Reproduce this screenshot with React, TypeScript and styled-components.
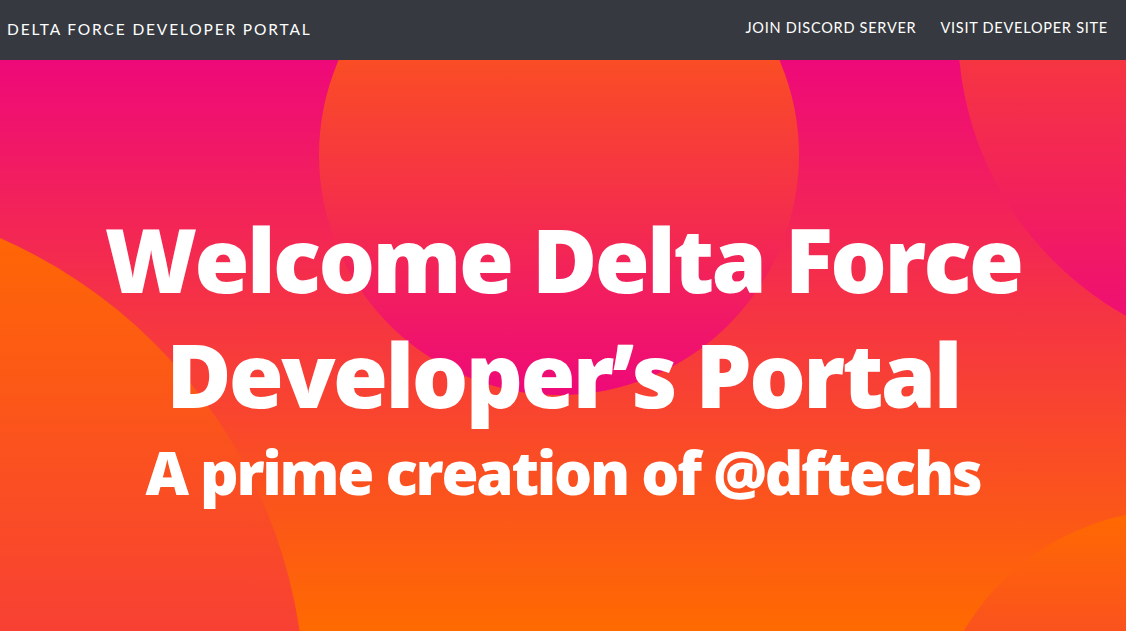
import React from "react";
import styled, { createGlobalStyle } from "styled-components";

const GlobalStyle = createGlobalStyle`
  html, body {
    margin: 0;
    padding: 0;
    width: 100%;
    height: 100%;
    overflow: hidden;
  }
  body {
    font-family: "Lato", "Liberation Sans", sans-serif;
  }
  #root {
    height: 100%;
  }
  * { box-sizing: border-box; }
`;

const Page = styled.div`
  display: flex;
  flex-direction: column;
  height: 631px;
  width: 1126px;
`;

const Navbar = styled.header`
  flex: 0 0 60px;
  display: flex;
  align-items: center;
  justify-content: space-between;
  padding: 0 18px 0 7px;
  background: #363a40;
  color: #ffffff;
`;

const Brand = styled.div`
  font-family: "Lato", sans-serif;
  font-size: 15.5px;
  letter-spacing: 1.85px;
  text-transform: uppercase;
  padding-bottom: 3px;
`;

const NavLinks = styled.nav`
  display: flex;
  gap: 24px;
  padding-bottom: 6px;
`;

const NavLink = styled.a`
  font-family: "Lato", sans-serif;
  font-size: 14.5px;
  letter-spacing: 0.75px;
  text-transform: uppercase;
  color: #ffffff;
  text-decoration: none;
`;

const Hero = styled.main`
  position: relative;
  flex: 1 1 auto;
  overflow: hidden;
  background: linear-gradient(180deg, #ee0979 0%, #ff6a00 100%);
  display: flex;
  flex-direction: column;
  align-items: center;
  padding-top: 141px;
`;

const Blob = styled.div<{ $x: number; $y: number; $size: number }>`
  position: absolute;
  left: ${(p) => p.$x}px;
  top: ${(p) => p.$y}px;
  width: ${(p) => p.$size}px;
  height: ${(p) => p.$size}px;
  border-radius: 50%;
  background: linear-gradient(180deg, #ff6a00 0%, #ee0979 100%);
  z-index: 0;
`;

const Title = styled.h1`
  position: relative;
  z-index: 1;
  margin: 0;
  font-family: "Open Sans", sans-serif;
  font-weight: 800;
  font-size: 89px;
  line-height: 115px;
  letter-spacing: -2.6px;
  color: #ffffff;
  text-align: center;
`;

const Subtitle = styled.h2`
  position: relative;
  z-index: 1;
  margin: 6px 0 0;
  font-family: "Open Sans", sans-serif;
  font-weight: 800;
  font-size: 60px;
  line-height: 70px;
  letter-spacing: -2.25px;
  color: #ffffff;
  text-align: center;
`;

const blobs = [
  { x: 319, y: -145, size: 480 },
  { x: 958, y: -357, size: 654 },
  { x: -715, y: 135, size: 1020 },
  { x: 930, y: 450, size: 490 },
];

export default function App() {
  return (
    <>
      <GlobalStyle />
      <Page>
        <Navbar>
          <Brand>Delta Force Developer Portal</Brand>
          <NavLinks>
            <NavLink href="#">Join Discord Server</NavLink>
            <NavLink href="#">Visit Developer Site</NavLink>
          </NavLinks>
        </Navbar>
        <Hero>
          {blobs.map((b, i) => (
            <Blob key={i} $x={b.x} $y={b.y} $size={b.size} />
          ))}
          <Title>
            Welcome Delta Force
            <br />
            Developer’s Portal
          </Title>
          <Subtitle>A prime creation of @dftechs</Subtitle>
        </Hero>
      </Page>
    </>
  );
}
